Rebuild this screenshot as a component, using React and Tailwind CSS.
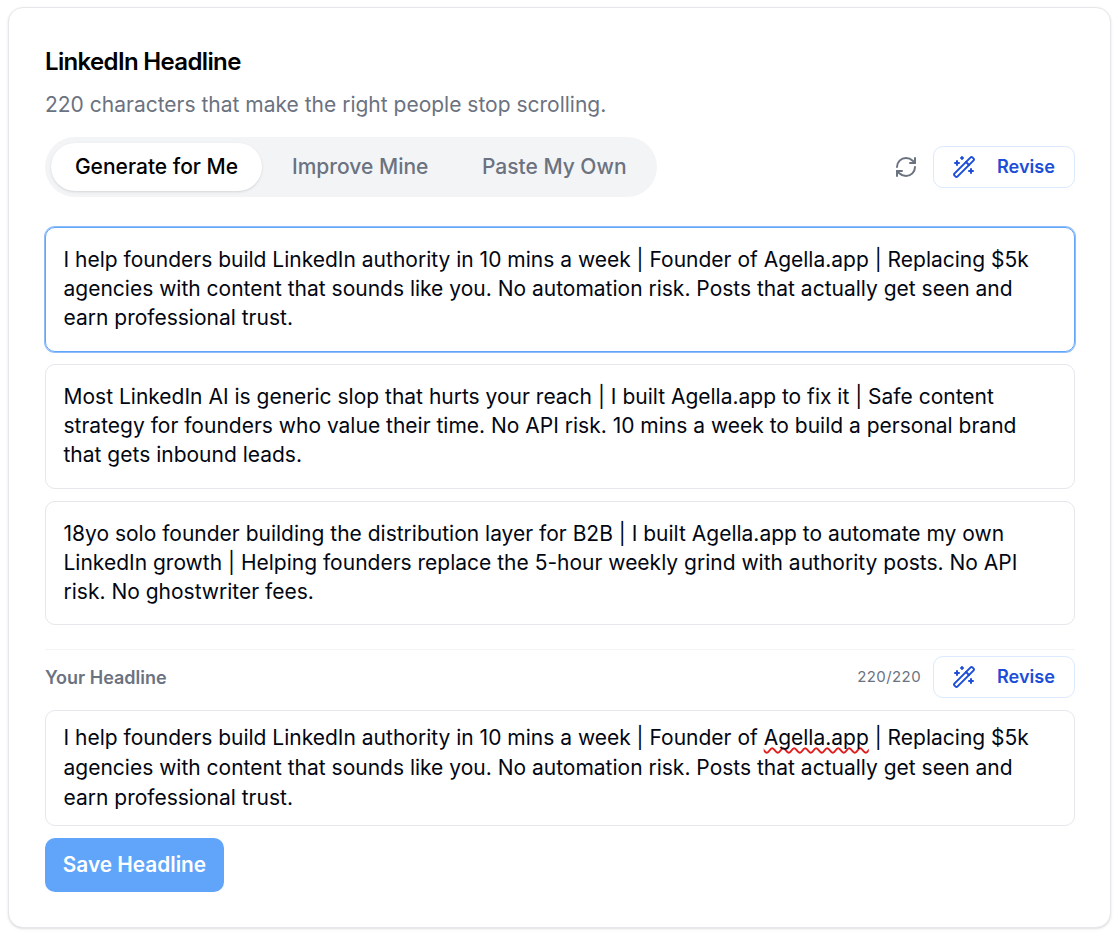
import React from 'react';
import { RefreshCw, WandSparkles } from 'lucide-react';

const options = [
  'I help founders build LinkedIn authority in 10 mins a week | Founder of Agella.app | Replacing $5k agencies with content that sounds like you. No automation risk. Posts that actually get seen and earn professional trust.',
  'Most LinkedIn AI is generic slop that hurts your reach | I built Agella.app to fix it | Safe content strategy for founders who value their time. No API risk. 10 mins a week to build a personal brand that gets inbound leads.',
  '18yo solo founder building the distribution layer for B2B | I built Agella.app to automate my own LinkedIn growth | Helping founders replace the 5-hour weekly grind with authority posts. No API risk. No ghostwriter fees.',
];

const ReviseButton = () => (
  <button className="flex h-[42px] w-[142px] items-center rounded-[10px] border border-[#dbeafe] bg-white pl-[18px] text-[#1d4ed8]">
    <WandSparkles size={24} strokeWidth={2} />
    <span className="ml-[21px] pb-px text-[18.1px] font-semibold">Revise</span>
  </button>
);

const App = () => {
  return (
    <div className="min-h-[932px] bg-white p-2 pt-[7px] font-['Inter',sans-serif]">
      <div className="h-[921px] w-[1103px] rounded-[15px] border border-[#e5e7eb] bg-white pt-[36px] pr-[35px] pl-9 shadow-sm">
        <h2 className="text-[24px] leading-[36px] font-semibold tracking-[-0.65px] text-black">LinkedIn Headline</h2>
        <p className="mt-[10px] text-[21px] leading-[30px] text-[#6b7280]">220 characters that make the right people stop scrolling.</p>

        <div className="mt-[17px] flex items-center justify-between">
          <div className="flex h-[60px] w-[612px] items-center rounded-full bg-[#f3f4f6] px-[6px] text-[21px] font-medium">
            <span className="flex h-[48px] w-[211px] items-center justify-center rounded-full bg-white text-black shadow-sm">Generate for Me</span>
            <span className="ml-[30px] text-[#6b7280]">Improve Mine</span>
            <span className="ml-[53.5px] text-[#6b7280]">Paste My Own</span>
          </div>
          <div className="flex items-center gap-[15px]">
            <RefreshCw size={24} className="text-[#6b7280]" />
            <ReviseButton />
          </div>
        </div>

        <div className="mt-[30px] flex flex-col gap-3">
          {options.map((text, i) => (
            <div
              key={i}
              className={
                i === 0
                  ? 'h-[125px] rounded-[10px] border border-[#60a5fa] pt-[17px] pr-[18px] pl-[17.5px] text-[21px] leading-[29px] text-[#030712] ring-1 ring-[#8fbdfb]'
                  : i === 1
                    ? 'h-[125px] rounded-[10px] border border-[#e5e7eb] pt-[17px] pr-[18px] pl-[17.5px] text-[21px] leading-[29px] text-[#030712]'
                    : 'h-[124px] rounded-[10px] border border-[#e5e7eb] pt-[17px] pr-[18px] pl-[17.5px] text-[21px] leading-[29px] text-[#030712]'
              }
            >
              {text}
            </div>
          ))}
        </div>

        <div className="mt-6 border-t border-[#f3f4f6] pt-[6px]">
          <div className="flex items-center justify-between">
            <span className="text-[18px] font-semibold text-[#6b7280]">Your Headline</span>
            <div className="flex items-center gap-3">
              <span className="text-[15px] tracking-[0.4px] text-[#6b7280]">220/220</span>
              <ReviseButton />
            </div>
          </div>
          <div className="mt-3 h-[116px] rounded-[10px] border border-[#e5e7eb] pt-[12px] pr-[18px] pl-[17.5px] text-[21px] leading-[30px] text-[#030712]">
            I help founders build LinkedIn authority in 10 mins a week | Founder of{' '}
            <span className="underline decoration-[#e11d1d] decoration-wavy decoration-[1.5px] underline-offset-[2px] [text-decoration-skip-ink:none]">Agella.app</span> | Replacing $5k agencies with content that sounds like you. No automation risk. Posts that actually get seen and earn professional trust.
          </div>
          <button className="mt-3 h-[54px] w-[179px] rounded-[10px] bg-[#60a5fa] text-[20.8px] font-semibold text-white">Save Headline</button>
        </div>
      </div>
    </div>
  );
};

export default App;
